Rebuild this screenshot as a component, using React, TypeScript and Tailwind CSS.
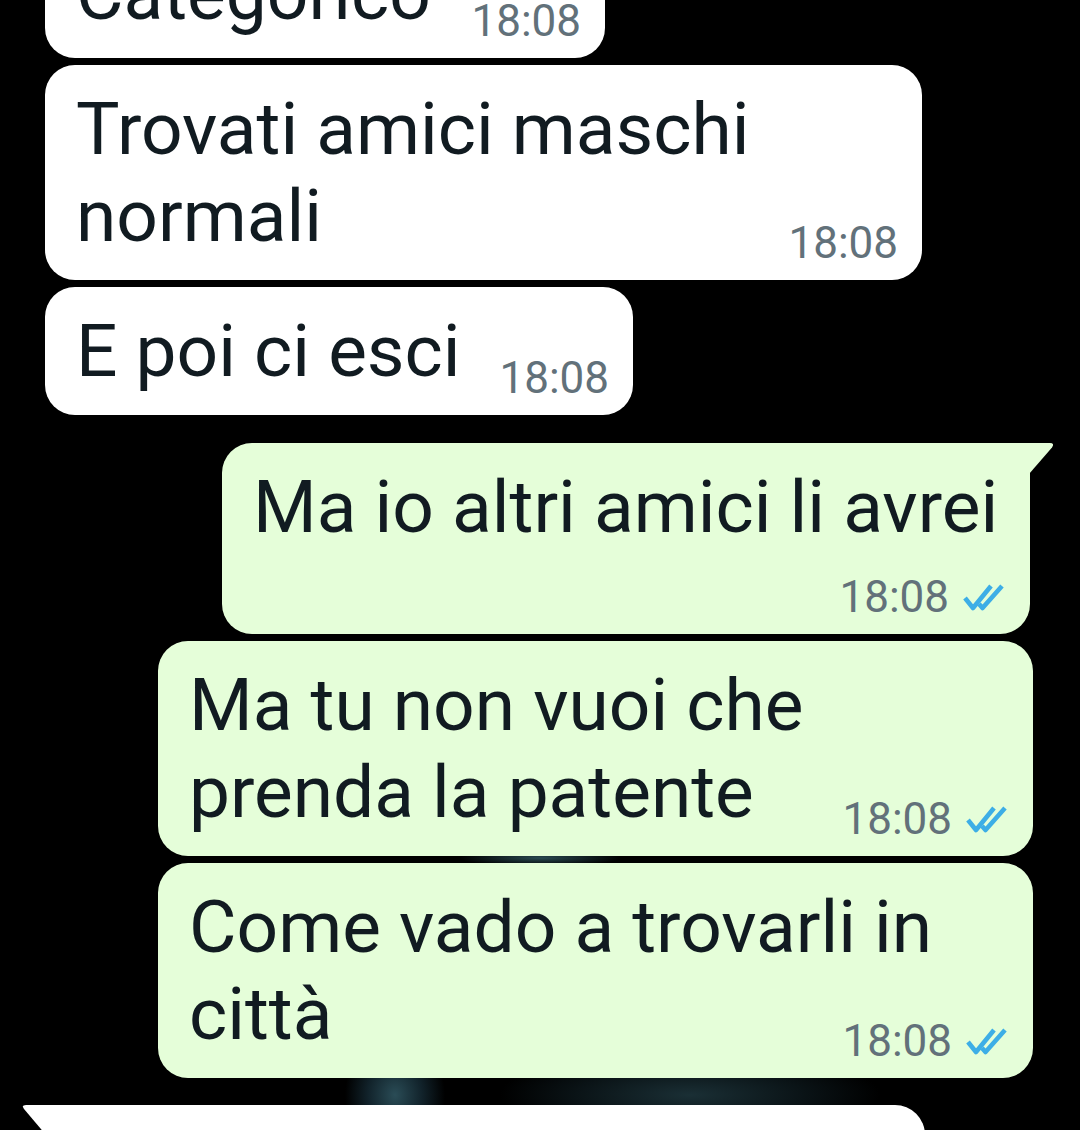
import React from "react";

function Ticks() {
  return (
    <svg width="44" height="28" viewBox="0 0 44 28" fill="none" className="shrink-0">
      <path d="M3 15 L11 25 L29 3" stroke="#3daee6" strokeWidth="4.6" strokeLinejoin="round" />
      <path d="M17 21 L20.5 25 L40 3" stroke="#3daee6" strokeWidth="4.6" strokeLinejoin="round" />
    </svg>
  );
}

type BubbleProps = {
  text: string;
  out?: boolean;
  newRow?: boolean;
  className?: string;
  tail?: boolean;
};

function Bubble({ text, out = false, newRow = false, className = "", tail = false }: BubbleProps) {
  return (
    <div
      className={`relative shrink-0 pl-[31px] pr-[24px] pt-[21px] pb-[15px] ${
        out ? "bg-[#e5fed9]" : "bg-white"
      } ${className}`}
    >
      {tail && (
        <svg width="26" height="32" viewBox="0 0 26 32" className="absolute top-0 right-[-25px]">
          <path d="M0 0 H21 Q26 0 23 4.5 L0 31 Z" fill="#e5fed9" />
        </svg>
      )}
      <p className="whitespace-pre-wrap text-[73px] leading-[87px] text-[#111b21]">{text}</p>
      <div
        className={`flex h-[44px] items-center justify-end gap-[13px] ${
          newRow ? "mt-[24px]" : "-mt-[39px]"
        }`}
      >
        <span className="text-[44px] leading-[44px] text-[#62717a]">18:08</span>
        {out && <Ticks />}
      </div>
    </div>
  );
}

export default function App() {
  return (
    <div className="flex h-[1130px] w-[1080px] flex-col overflow-hidden bg-black bg-[radial-gradient(ellipse_50px_60px_at_395px_1095px,#2a4c56_0%,#11222a_55%,transparent_100%),radial-gradient(ellipse_190px_45px_at_690px_1095px,#1a2f35_0%,#0a1316_60%,transparent_100%),radial-gradient(ellipse_80px_8px_at_540px_858px,#2a4a52_0%,transparent_100%)] font-['Roboto',sans-serif]">
      <Bubble text="Categorico" className="-mt-[70px] ml-[45px] w-[560px] self-start rounded-[30px]" />
      <Bubble
        text="Trovati amici maschi normali"
        className="mt-[7px] ml-[45px] w-[877px] self-start rounded-[30px]"
      />
      <Bubble text="E poi ci esci" className="mt-[7px] ml-[45px] w-[588px] self-start rounded-[30px]" />

      <Bubble
        out
        tail
        newRow
        text="Ma io altri amici li avrei"
        className="mt-[28px] mr-[50px] w-[808px] self-end whitespace-nowrap rounded-[30px] rounded-tr-none pl-[30px]"
      />
      <Bubble
        out
        text="Ma tu non vuoi che prenda la patente"
        className="mt-[7px] mr-[47px] w-[875px] self-end rounded-[30px]"
      />
      <Bubble
        out
        text="Come vado a trovarli in città"
        className="mt-[7px] mr-[47px] w-[875px] self-end rounded-[30px]"
      />

      <div className="relative mt-[27px] ml-[45px] h-[120px] w-[880px] shrink-0 self-start rounded-[30px] rounded-tl-none bg-white">
        <svg width="24" height="30" viewBox="0 0 24 30" className="absolute top-0 left-[-23px]">
          <path d="M24 0 H4 Q-1 0 2 4 L24 30 Z" fill="#ffffff" />
        </svg>
      </div>
    </div>
  );
}
